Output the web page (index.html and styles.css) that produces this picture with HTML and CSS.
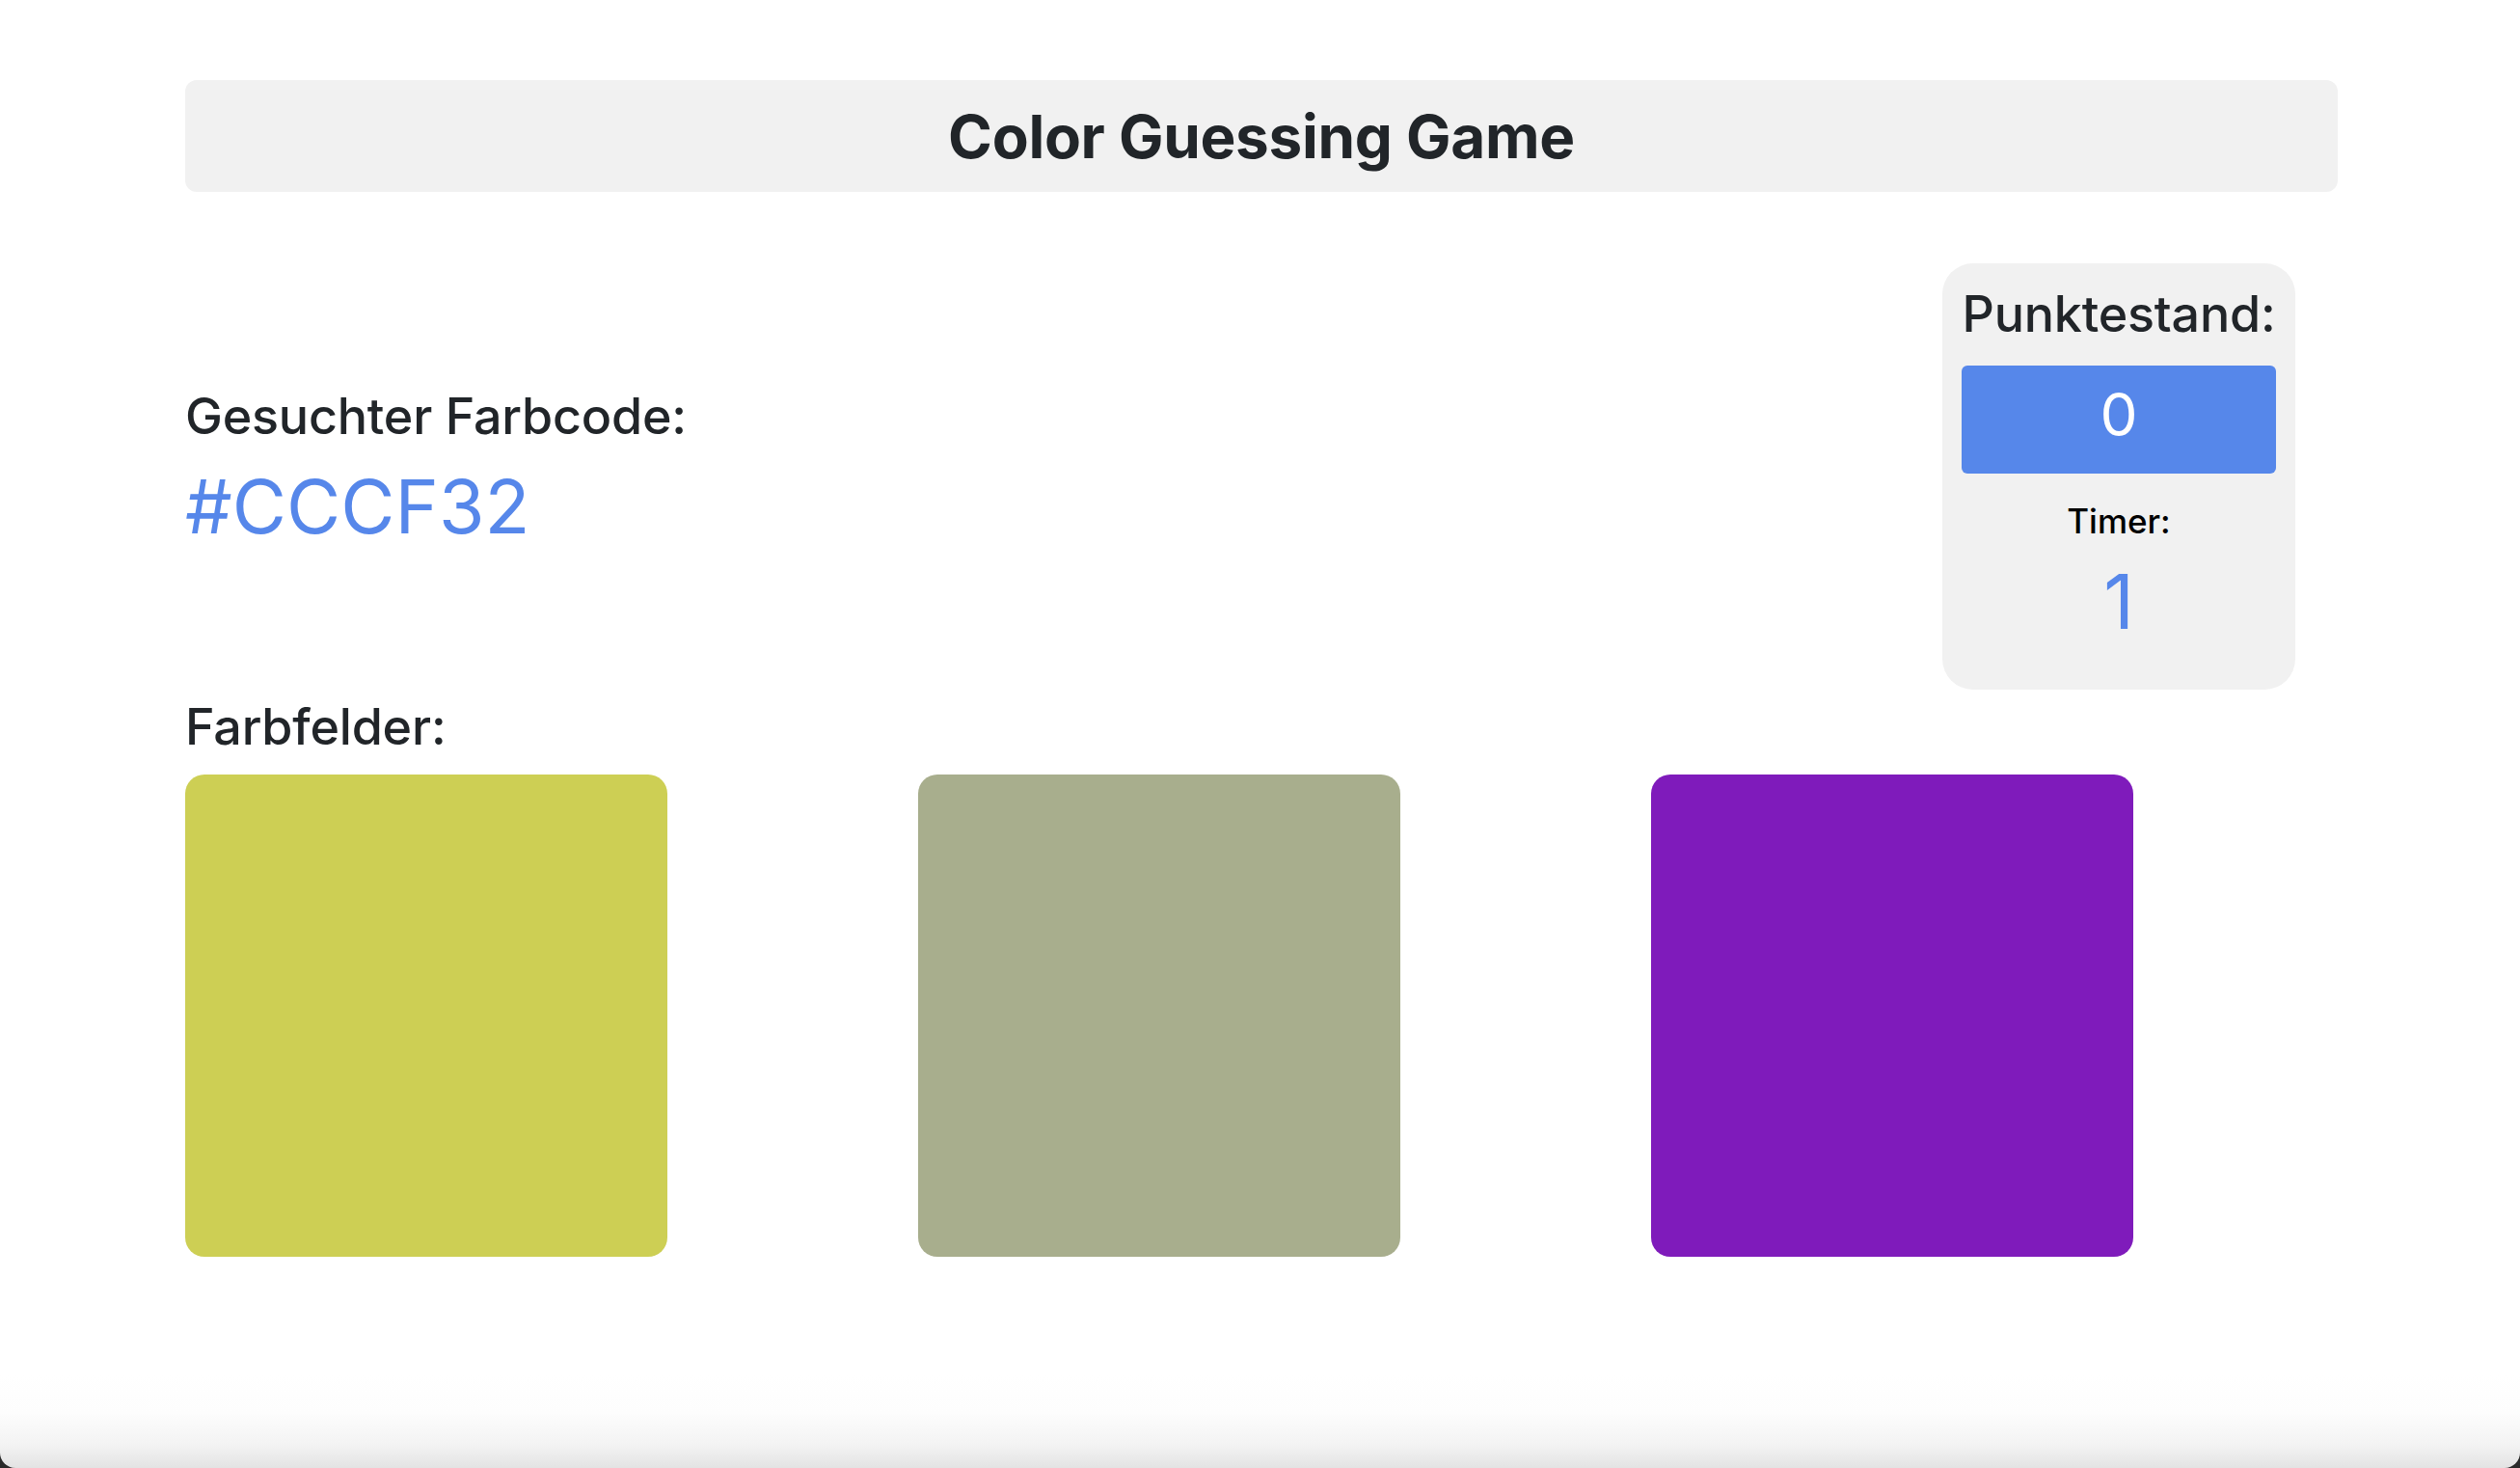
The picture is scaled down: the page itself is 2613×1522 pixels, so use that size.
FILE: index.html
```html
<!DOCTYPE html>
<html lang="de">
<head>
<meta charset="utf-8">
<title>Color Guessing Game</title>
<link rel="stylesheet" href="styles.css">
</head>
<body>
<div class="container">
  <header class="title-bar">
    <h1 class="title">Color Guessing Game</h1>
  </header>

  <section class="top-row">
    <div class="target">
      <h3 class="heading">Gesuchter Farbcode:</h3>
      <h1 class="code">#CCCF32</h1>
    </div>
    <aside class="score-card">
      <h3 class="heading">Punktestand:</h3>
      <div class="score">0</div>
      <div class="timer-label">Timer:</div>
      <div class="timer-value">1</div>
    </aside>
  </section>

  <section class="fields">
    <h3 class="heading">Farbfelder:</h3>
    <div class="swatch-grid">
      <div class="swatch swatch-yellow"></div>
      <div class="swatch swatch-olive"></div>
      <div class="swatch swatch-purple"></div>
    </div>
  </section>
</div>
<div class="window-edge"><div class="window-fade"></div></div>
</body>
</html>
```

FILE: styles.css
```css
* { box-sizing: border-box; }

html, body {
  margin: 0;
  padding: 0;
  background: #ffffff;
}

body {
  font-family: Inter, "Noto Sans", "Liberation Sans", sans-serif;
  color: #212529;
  min-height: 1522px;
}

.container {
  padding: 83px 189px 0 192px;
}

.title-bar {
  height: 116px;
  background: #f1f1f1;
  border-radius: 12px;
  display: flex;
  align-items: center;
  justify-content: center;
}

.title {
  margin: 0;
  font-size: 62px;
  font-weight: 700;
  line-height: 1.2;
  letter-spacing: -0.3px;
  padding-top: 3px;
}

.top-row {
  margin-top: 74px;
  display: flex;
  align-items: center;
  justify-content: space-between;
  padding-right: 44px;
}

.heading {
  margin: 0 0 16px 0;
  font-size: 52px;
  font-weight: 500;
  line-height: 1.2;
  letter-spacing: -0.2px;
}

.code {
  margin: 0 0 16px 0;
  font-size: 77px;
  font-weight: 400;
  line-height: 1.2;
  color: #5687ea;
}

.score-card {
  width: 366px;
  background: #f1f1f1;
  border-radius: 32px;
  padding: 22px 20px 45px;
  display: flex;
  flex-direction: column;
  align-items: stretch;
  text-align: center;
}

.score-card .heading {
  margin-bottom: 22px;
  white-space: nowrap;
}

.score {
  height: 112px;
  background: #5687ea;
  border-radius: 6px;
  color: #ffffff;
  font-size: 62px;
  line-height: 1;
  display: flex;
  align-items: center;
  justify-content: center;
  padding-bottom: 10px;
}

.timer-label {
  margin-top: 23px;
  font-size: 35px;
  font-weight: 500;
  line-height: 1.5;
  color: #000000;
}

.timer-value {
  margin-top: 10px;
  font-size: 78px;
  line-height: 1.2;
  color: #5687ea;
}

.fields {
  margin-top: 8px;
}

.fields .heading {
  margin-bottom: 17px;
}

.swatch-grid {
  display: grid;
  grid-template-columns: repeat(3, 1fr);
  column-gap: 48px;
}

.swatch {
  width: 500px;
  height: 500px;
  border-radius: 20px;
}

.swatch-yellow { background: #cdcf54; }
.swatch-olive  { background: #a8ae8d; }
.swatch-purple { background: #7f1bbb; }

.window-edge {
  position: fixed;
  left: 0;
  right: 0;
  bottom: 0;
  height: 96px;
  background: #2a2a2a;
  pointer-events: none;
}

.window-fade {
  height: 100%;
  border-radius: 0 0 16px 16px;
  background: linear-gradient(to bottom, #ffffff 0%, #fdfdfd 40%, #f3f3f3 75%, #e3e3e3 100%);
}
```
